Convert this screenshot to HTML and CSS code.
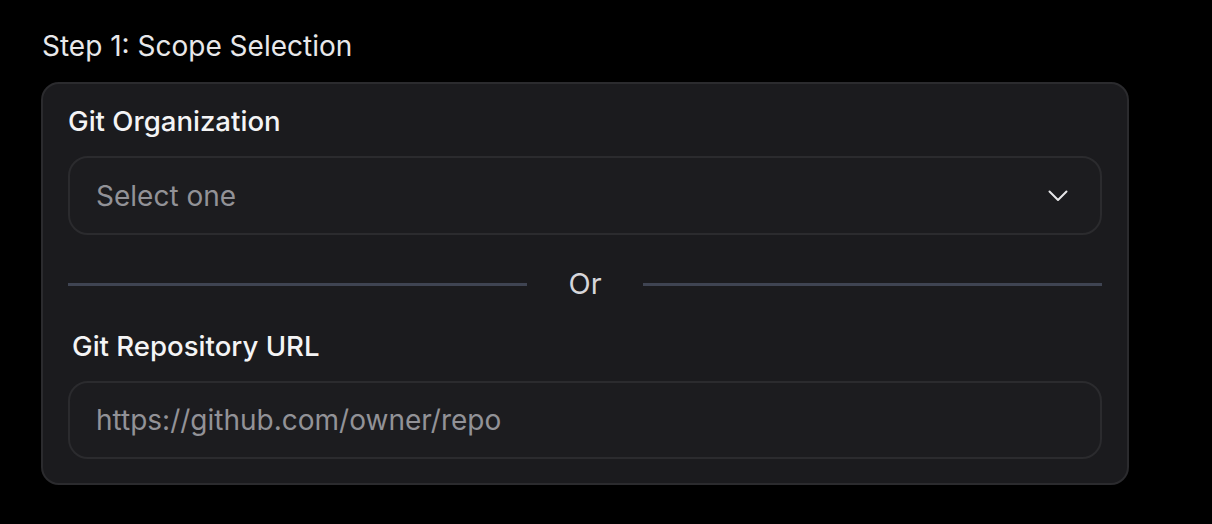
FILE: index.html
```html
<!DOCTYPE html>
<html lang="en">
<head>
<meta charset="utf-8">
<title>Scope Selection</title>
<link rel="stylesheet" href="styles.css">
</head>
<body>
<main class="page">
  <h2 class="step-title">Step 1: Scope Selection</h2>
  <section class="card">
    <label class="field-label">Git Organization</label>
    <div class="select">
      <span class="placeholder">Select one</span>
      <svg class="chevron" width="20" height="12" viewBox="0 0 20 12" aria-hidden="true">
        <path d="M1.5 1.5 L10 10 L18.5 1.5" fill="none" stroke="#e6e6e8" stroke-width="2" stroke-linecap="round" stroke-linejoin="round"/>
      </svg>
    </div>
    <div class="divider">
      <span class="divider-line"></span>
      <span class="divider-text">Or</span>
      <span class="divider-line"></span>
    </div>
    <label class="field-label field-label--inset">Git Repository URL</label>
    <div class="input">
      <span class="placeholder">https://github.com/owner/repo</span>
    </div>
  </section>
</main>
</body>
</html>
```
FILE: styles.css
```css
html, body {
  margin: 0;
  padding: 0;
  background: #000;
}
body {
  font-family: Inter, "Noto Sans", "Liberation Sans", sans-serif;
  color: #f2f2f3;
}
.page {
  padding: 28px 0 0 41px;
  width: 1088px;
}
.step-title {
  margin: 0 0 0 1px;
  font-size: 28px;
  line-height: 36px;
  font-weight: 400;
  color: #e8e8ea;
  height: 36px;
}
.card {
  margin-top: 18px;
  box-sizing: border-box;
  width: 1088px;
  height: 403px;
  background: #1b1b1e;
  border: 2px solid #2b2b2e;
  border-radius: 18px;
  padding: 19px 25px 0 25px;
  display: flex;
  flex-direction: column;
}
.field-label {
  display: block;
  font-size: 27.6px;
  line-height: 36px;
  font-weight: 500;
  color: #f4f4f5;
}
.field-label--inset {
  padding-left: 4px;
  margin-top: 26px;
}
.select, .input {
  box-sizing: border-box;
  height: 79px;
  margin-top: 17px;
  border: 2.5px solid #2b2b2e;
  border-radius: 20px;
  background: #1c1c1f;
  display: flex;
  align-items: center;
  justify-content: space-between;
  padding: 0 32px 0 26px;
}
.input {
  height: 78px;
}
.placeholder {
  font-size: 28px;
  color: #929297;
  line-height: 36px;
}
.chevron {
  display: block;
}
.divider {
  margin-top: 31px;
  display: flex;
  align-items: center;
  height: 36px;
}
.divider-line {
  flex: 1;
  height: 3px;
  background: #3f4452;
}
.divider-text {
  width: 116px;
  text-align: center;
  font-size: 29px;
  line-height: 36px;
  color: #d6d6da;
}
```
